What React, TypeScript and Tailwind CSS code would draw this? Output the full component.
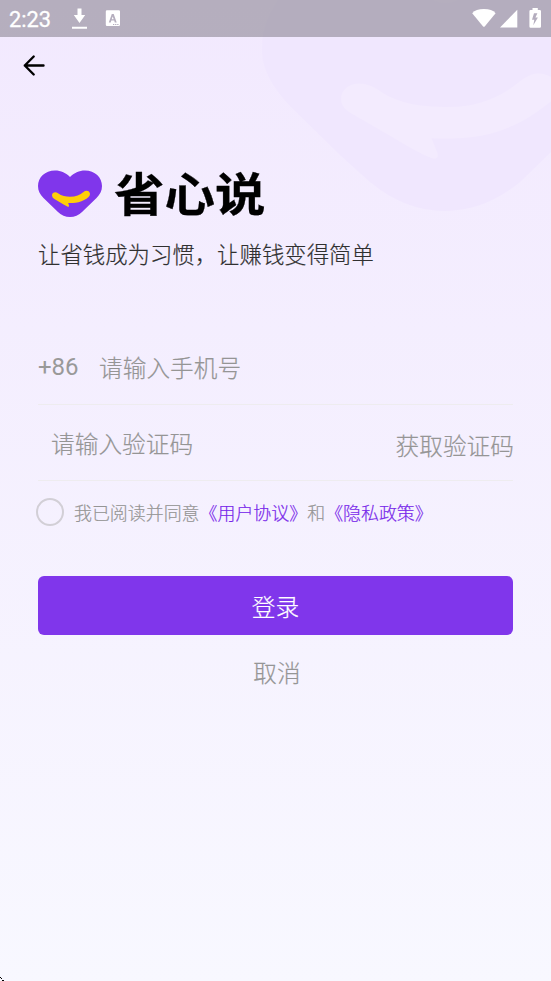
import React from 'react';

function StatusBar() {
  return (
    <header className="relative flex h-[37px] items-center bg-black/25 text-white">
      <span className="w-[70px] pt-[2px] pl-[9px] font-['Roboto',sans-serif] text-[21.800px] leading-[35px] font-normal [-webkit-text-stroke:0.3px]">2:23</span>
      <svg className="h-[37px] w-[60px]" viewBox="70 0 60 37" fill="currentColor">
        <path d="M77.5 8.5h4v6.5h3.7l-5.7 8-5.7-8h3.7zM72 26.7h15v2.1H72z" />
        <path
          fillRule="evenodd"
          d="M107 10.2h11.8q1.2 0 1.2 1.2v13.4q0 1.2-1.2 1.2H107q-1.2 0-1.2-1.2V11.400q0-1.200 1.200-1.200zM111.800 14l-3 8.500h1.900l.6-2h2.900l.6 2h1.900l-3-8.500zm.9 2.400l1 2.900h-2zM113 24h1.300v1H113zm2.100 0h1.300v1h-1.300zm2.100 0h1.300v1h-1.300z"
        />
      </svg>
      <svg className="ml-auto h-[37px] w-[81px]" viewBox="470 0 81 37" fill="currentColor">
        <path d="M472.200 13.200Q475.800 9 483.900 9T495.600 13.200L484.700 26.400Q483.900 27.300 483.100 26.400z" />
        <path d="M517.300 9.800v17.800H500z" />
        <path
          fillRule="evenodd"
          d="M532.500 8h5.300v2h2q1.200 0 1.200 1.200v15.300q0 1.200-1.200 1.200h-9.200q-1.200 0-1.200-1.200V11.200q0-1.200 1.200-1.200h1.900zM534 13.300l-2 6.400h2.300l-1 5.600 4.600-7.900h-2.500l2-4.100z"
        />
      </svg>
    </header>
  );
}

function HeartWatermark() {
  return (
    <svg className="absolute top-0 right-0 h-[220px] w-[300px]" viewBox="251 0 300 220">
      <path
        fill="#f0e7fe"
        d="M445 3C438 3 431 0 425-5L282-5Q262 20 262 48C262 68 270 84 290 106L340 155L370 182Q405 211 445 211T520 182L550 153L560 143V-5H465C459 0 452 3 445 3z"
      />
      <path
        fill="#f3ebfe"
        d="M341 99C341 90 349 83.500 359 83.500C368 83.500 374 87 383 93C400 104 424 107 446 107C478 107 499 98 519 82C527 76 532 73.500 539 73.500Q548 73.500 556 81V97C530 120 500 136 462 138Q446 139 431.500 138.300L437.500 153Q439 159 433 158.500Q425 156 410 147.500L380 130L355 115.500Q341 109 341 99z"
      />
    </svg>
  );
}

function HeartLogo() {
  return (
    <svg className="h-[48px] w-[66px] shrink-0" viewBox="37 170 66 48">
      <path
        fill="#8036eb"
        d="M70 177C66 173 61 170.500 55 170.500C45 170.500 38 177.500 38 186C38 191 40 194.500 43.500 198L58 212Q63 217 70 217T82 212L96.500 198C100 194.500 102 191 102 186C102 177.500 95 170.500 85 170.500C79 170.500 74 173 70 177z"
      />
      <path
        fill="#ffce08"
        d="M52 195.300C52 192.500 55.500 191.500 58 193.200C61.500 195.800 66 196.700 70 196.700C76 196.700 80 194.700 83.500 191.900C86 189.700 90 190.700 90 194C90 198.500 80 202.800 73 203L68.200 203L69 205.700Q69.300 207 67.800 206.700Q66 206 64 204.800L54 198.700Q52 197.500 52 195.300z"
      />
    </svg>
  );
}

export default function App() {
  return (
    <div className="relative h-[981px] w-[551px] overflow-hidden bg-linear-to-b from-[#f2e9fe] to-[#f8f8ff] font-['Noto_Sans_CJK_SC',sans-serif] font-light text-[#959595] [-webkit-text-stroke:0.2px]">
      <HeartWatermark />
      <StatusBar />

      <nav className="relative flex h-[57px] items-center pl-[22px]">
        <button aria-label="返回">
          <svg
            className="block h-[24px] w-[24px]"
            viewBox="22 54 24 24"
            fill="none"
            stroke="#000"
            strokeWidth="2.400"
            strokeLinecap="round"
            strokeLinejoin="round"
          >
            <path d="M43.500 65.500H24.800M33.700 56.500L24.800 65.500L33.700 74.500" />
          </svg>
        </button>
      </nav>

      <main className="relative px-[38px]">
        <div className="-ml-px mt-[76px] flex h-[48px] items-center">
          <HeartLogo />
          <h1 className="ml-[11px] origin-center -translate-y-[3px] scale-y-[0.910] text-[50.500px] leading-[48px] font-bold text-black [-webkit-text-stroke:0.3px]">
            省心说
          </h1>
        </div>
        <p className="mt-[18px] text-[22.400px] leading-[34px] whitespace-nowrap text-[#303030]">让省钱成为习惯，让赚钱变得简单</p>

        <div className="mt-[61px] flex h-[74px] items-center border-b border-[#eeecef] text-[23.700px]">
          <span className="w-[61px] pb-px font-['Roboto',sans-serif] text-[24px] font-normal text-[#999999] [-webkit-text-stroke:0px]">+86</span>
          <span>请输入手机号</span>
        </div>
        <div className="flex h-[76px] items-center justify-between border-b border-[#eeecef] pl-[13px] text-[23.700px] whitespace-nowrap">
          <span className="pt-[3px]">请输入验证码</span>
          <button className="-mr-px pt-[6px]">获取验证码</button>
        </div>

        <div className="-ml-[2px] mt-[16px] flex h-[30px] items-center text-[17.950px] whitespace-nowrap">
          <span className="mr-[10px] h-[28px] w-[28px] shrink-0 rounded-full border-2 border-[#d2cfd6]" />
          <p className="pt-px">
            我已阅读并同意<span className="text-[#7828ea]">《用户协议》</span>和<span className="text-[#7828ea]">《隐私政策》</span>
          </p>
        </div>

        <button className="mt-[49px] flex h-[58.500px] w-full items-center justify-center rounded-[6px] bg-[#8036eb] pt-[3px] text-[23.700px] text-white">
          登录
        </button>
        <button className="mt-[20.500px] flex h-[36px] w-full items-center justify-center pl-[3px] text-[23.700px]">取消</button>
      </main>

      <svg className="absolute bottom-0 left-0 h-[4px] w-[4px]" viewBox="0 0 4 4" shapeRendering="crispEdges">
        <path d="M0 0h1v1H0zM1 1h1v1H1zM2 3h2v1H2z" fill="#000" />
      </svg>
    </div>
  );
}
